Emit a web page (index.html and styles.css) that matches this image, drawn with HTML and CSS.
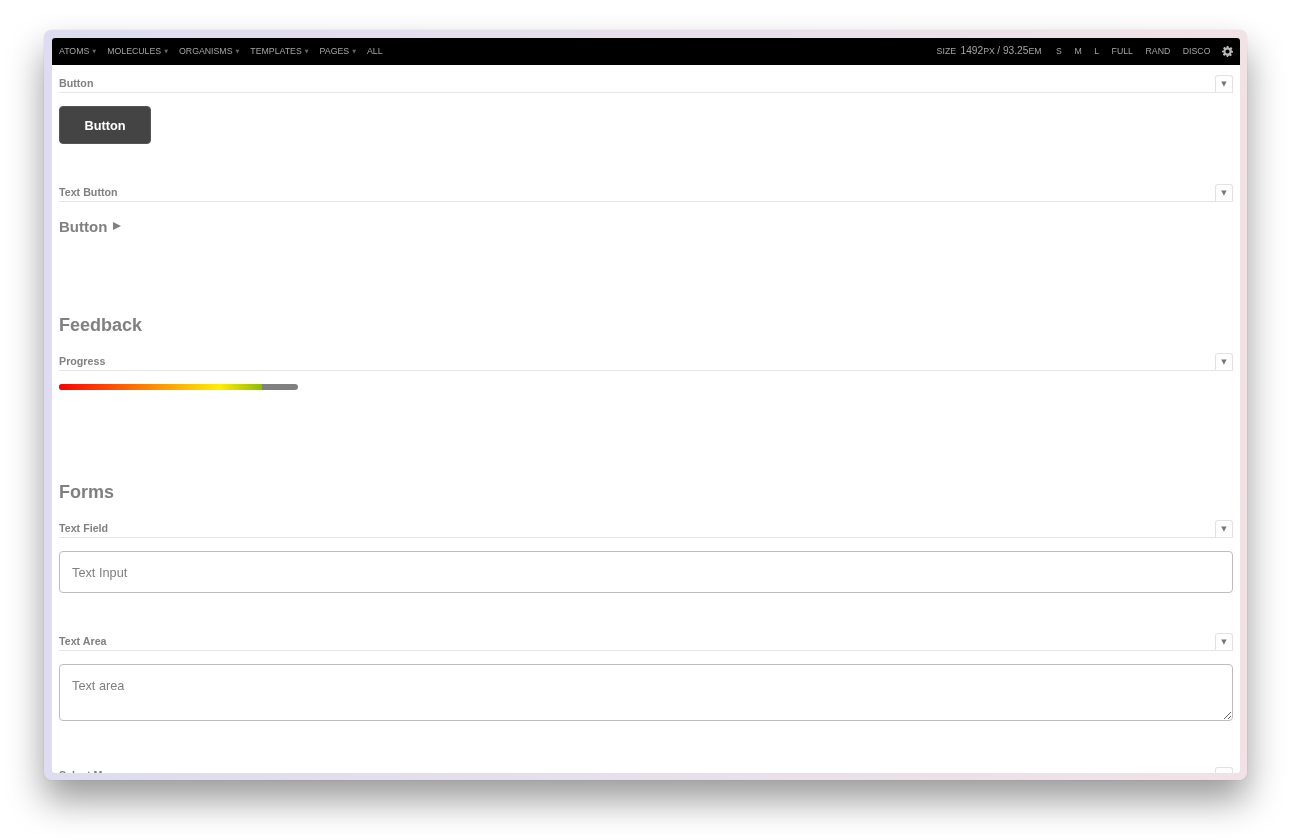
FILE: index.html
```html
<!DOCTYPE html>
<html lang="en">
    <head>
        <meta charset="utf-8">
        <title>Pattern Lab</title>
        <link rel="stylesheet" href="styles.css">
    </head>
    <body>
        <div class="window">
            <div class="screen">
                <nav class="topbar">
                    <ul class="menu">
                        <li>ATOMS<span class="caret">▼</span></li>
                        <li>MOLECULES<span class="caret">▼</span></li>
                        <li>ORGANISMS<span class="caret">▼</span></li>
                        <li>TEMPLATES<span class="caret">▼</span></li>
                        <li>PAGES<span class="caret">▼</span></li>
                        <li>ALL</li>
                    </ul>
                    <ul class="menu menu-right">
                        <li class="size">SIZE <span class="big size-px">1492</span>PX <span class="big">/ 93.25</span>EM</li>
                        <li>S</li>
                        <li>M</li>
                        <li>L</li>
                        <li>FULL</li>
                        <li>RAND</li>
                        <li>DISCO</li>
                        <li class="gear">
                            <svg width="11" height="11" viewBox="0 0 24 24"><path fill="#b8b8b8" fill-rule="evenodd" d="M10 0h4l.7 3.400 2.200.9L19.800 2.400l2.800 2.800-1.900 2.900.9 2.200L24 11v3l-3.400.7-.9 2.200 1.900 2.900-2.800 2.800-2.900-1.900-2.200.9L13.500 24h-3l-.7-3.400-2.200-.9-2.900 1.900-2.800-2.800 1.900-2.900-.9-2.200L0 13.500v-3l3.400-.7.9-2.200-1.900-2.900 2.800-2.800 2.900 1.900 2.200-.9zM12 7.500a4.500 4.500 0 1 0 0 9 4.500 4.500 0 0 0 0-9z"/></svg>
                        </li>
                    </ul>
                </nav>
                <main class="content">
                    <section class="pattern">
                        <div class="pattern-head"><h4>Button</h4><span class="toggle">▼</span></div>
                        <a href="#" class="button">Button</a>
                    </section>
                    <section class="pattern">
                        <div class="pattern-head"><h4>Text Button</h4><span class="toggle">▼</span></div>
                        <a href="#" class="text-button">Button<span class="arrow"></span></a>
                    </section>
                    <h2 class="feedback-title">Feedback</h2>
                    <section class="pattern">
                        <div class="pattern-head"><h4>Progress</h4><span class="toggle">▼</span></div>
                        <div class="progress"><div class="progress-fill" style="width: 85%"></div></div>
                    </section>
                    <h2 class="forms-title">Forms</h2>
                    <section class="pattern">
                        <div class="pattern-head"><h4>Text Field</h4><span class="toggle">▼</span></div>
                        <input type="text" class="field" placeholder="Text Input">
                    </section>
                    <section class="pattern">
                        <div class="pattern-head"><h4>Text Area</h4><span class="toggle">▼</span></div>
                        <textarea class="field field-area" placeholder="Text area"></textarea>
                    </section>
                    <section class="pattern">
                        <div class="pattern-head"><h4>Select Menu</h4><span class="toggle">▼</span></div>
                    </section>
                </main>
            </div>
        </div>
    </body>
</html>
```

FILE: styles.css
```css
* {
    margin: 0;
    padding: 0;
    box-sizing: border-box;
}
html, body {
    height: 100%;
}
body {
    background-color: #fff;
    font-family: "Liberation Sans", Arial, sans-serif;
    color: #808080;
    padding: 30px 45px 60px 44px;
    overflow: hidden;
}
a {
    text-decoration: none;
}
ul {
    list-style: none;
}
.window {
    height: 750px;
    padding: 8px 7px 7px 8px;
    border-radius: 8px;
    background: linear-gradient(to right, #dddcf0, #f1e2e6);
    box-shadow: 0 0 1px rgba(0, 0, 0, .3), 0 20px 36px rgba(0, 0, 0, .4);
}
.screen {
    display: flex;
    flex-direction: column;
    height: 100%;
    background-color: #fff;
    border-radius: 3px;
    overflow: hidden;
    filter: blur(.4px);
    will-change: transform;
}
.topbar {
    flex: none;
    display: flex;
    justify-content: space-between;
    align-items: center;
    height: 27px;
    padding: 0 7px 2px 7px;
    background-color: #000;
}
.menu {
    display: flex;
    align-items: center;
    gap: 11px;
    color: #a4a4a4;
    font-size: 8.75px;
}
.menu-right {
    gap: 12.5px;
}
.size {
    margin-right: 2px;
}
.big {
    font-size: 10.2px;
}
.size-px {
    margin-left: 2px;
}
.caret {
    margin-left: 3px;
    font-family: "DejaVu Sans", sans-serif;
    font-size: 5px;
    color: #666;
    vertical-align: 1px;
}
.gear {
    display: flex;
    margin-left: -1px;
    margin-top: 2px;
}
.content {
    flex: 1;
    min-height: 0;
    padding: 10px 7px 0 7px;
    overflow: hidden;
}
.pattern {
    margin-bottom: 40px;
}
.pattern-head {
    display: flex;
    justify-content: space-between;
    align-items: flex-end;
    height: 18px;
    margin-bottom: 13px;
    border-bottom: 1px solid #e6e6e6;
}
h4 {
    font-size: 10.7px;
    line-height: 18px;
    color: #808080;
}
.toggle {
    width: 18px;
    height: 18px;
    margin-bottom: -1px;
    border: 1px solid #e2e2e2;
    border-bottom-color: #e6e6e6;
    border-radius: 3px 3px 0 0;
    font-family: "DejaVu Sans", sans-serif;
    font-size: 7px;
    line-height: 16px;
    text-align: center;
    color: #777;
}
h2 {
    font-size: 18px;
    line-height: 22px;
    color: #808080;
}
.feedback-title {
    margin: 77px 0 17px 0;
}
.forms-title {
    margin: 91px 0 17px 0;
}
.button {
    display: block;
    width: 92px;
    height: 38px;
    border: 1px solid #555;
    border-radius: 4px;
    background-color: #444;
    color: #fff;
    font-size: 12.75px;
    font-weight: 700;
    line-height: 37px;
    text-align: center;
}
.text-button {
    display: flex;
    align-items: center;
    height: 22px;
    margin-bottom: 2px;
    color: #808080;
    font-size: 15px;
    font-weight: 700;
}
.arrow {
    width: 0;
    height: 0;
    margin-left: 6px;
    border-left: 8px solid #808080;
    border-top: 4px solid transparent;
    border-bottom: 4px solid transparent;
}
.progress {
    width: 239px;
    height: 6px;
    border-radius: 3px;
    background-color: #808080;
    overflow: hidden;
}
.progress-fill {
    height: 100%;
    background: linear-gradient(to right, #f00, #ffef00 79%, #8fbb00);
}
.field {
    display: block;
    width: 100%;
    height: 42px;
    padding: 0 12px;
    border: 1px solid #bdbdbd;
    border-radius: 4px;
    outline: none;
    font-family: "Liberation Sans", Arial, sans-serif;
    font-size: 12.75px;
    color: #808080;
}
.field::placeholder {
    color: #808080;
    opacity: 1;
}
.field-area {
    height: 57px;
    margin-bottom: 46px;
    padding: 13px 12px;
    line-height: 15px;
}
```
